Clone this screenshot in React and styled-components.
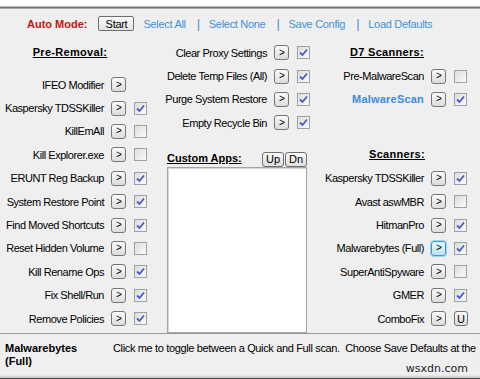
import styled, { createGlobalStyle } from "styled-components";

const GlobalStyle = createGlobalStyle`
  html, body {
    margin: 0;
    padding: 0;
    background: #ffffff;
  }
  body {
    font-family: "Liberation Sans", Arial, sans-serif;
    font-size: 11px;
    color: #000;
    overflow: hidden;
  }
`;

const preRemoval = [
  { label: "IFEO Modifier", box: null },
  { label: "Kaspersky TDSSKiller", box: true },
  { label: "KillEmAll", box: false },
  { label: "Kill Explorer.exe", box: false },
  { label: "ERUNT Reg Backup", box: true },
  { label: "System Restore Point", box: true },
  { label: "Find Moved Shortcuts", box: true },
  { label: "Reset Hidden Volume", box: false },
  { label: "Kill Rename Ops", box: true },
  { label: "Fix Shell/Run", box: true },
  { label: "Remove Policies", box: true },
];

const misc = [
  { label: "Clear Proxy Settings", box: true },
  { label: "Delete Temp Files (All)", box: true },
  { label: "Purge System Restore", box: true },
  { label: "Empty Recycle Bin", box: true },
];

const d7 = [
  { label: "Pre-MalwareScan", box: false },
  { label: "MalwareScan", box: true, accent: true },
];

const scanners = [
  { label: "Kaspersky TDSSKiller", box: true },
  { label: "Avast aswMBR", box: false },
  { label: "HitmanPro", box: true },
  { label: "Malwarebytes (Full)", box: true, hover: true },
  { label: "SuperAntiSpyware", box: false },
  { label: "GMER", box: true },
  { label: "ComboFix", box: "U" },
];

const Check = () => (
  <svg width="9" height="9" viewBox="0 0 9 9">
    <path d="M1 4.5 L3.5 7 L8 1.5" fill="none" stroke="#4b5bc4" strokeWidth="1.8" />
  </svg>
);

const OptionRow = ({ label, box, accent, hover }) => (
  <Row>
    <Label $accent={accent}>{label}</Label>
    <ArrowButton $hover={hover}>&gt;</ArrowButton>
    <BoxSlot>
      {box === "U" ? (
        <SmallButton>U</SmallButton>
      ) : box === null ? null : (
        <CheckBox>{box && <Check />}</CheckBox>
      )}
    </BoxSlot>
  </Row>
);

const App = () => {
  return (
    <>
      <GlobalStyle />
      <TopStrip />
      <Panel>
        <Toolbar>
          <AutoLabel>Auto Mode:</AutoLabel>
          <StartButton>Start</StartButton>
          <LinkText>Select All</LinkText>
          <Divider>|</Divider>
          <LinkText>Select None</LinkText>
          <Divider>|</Divider>
          <LinkText>Save Config</LinkText>
          <Divider>|</Divider>
          <LinkText>Load Defaults</LinkText>
        </Toolbar>

        <Columns>
          <Column $right={12}>
            <Header $shift={-8} $after={8.6}>Pre-Removal:</Header>
            {preRemoval.map((o) => (
              <OptionRow key={o.label} {...o} />
            ))}
          </Column>

          <Column $right={9}>
            {misc.map((o) => (
              <OptionRow key={o.label} {...o} />
            ))}
            <CustomHead>
              <CustomTitle>Custom Apps:</CustomTitle>
              <UpDn>
                <SmallButton $wide>Up</SmallButton>
                <SmallButton $wide>Dn</SmallButton>
              </UpDn>
            </CustomHead>
            <ListBox />
          </Column>

          <Column $right={12}>
            <Header $shift={-14}>D7 Scanners:</Header>
            {d7.map((o) => (
              <OptionRow key={o.label} {...o} />
            ))}
            <Header $shift={6} $before={32}>Scanners:</Header>
            {scanners.map((o) => (
              <OptionRow key={o.label} {...o} />
            ))}
          </Column>
        </Columns>
      </Panel>

      <StatusBar>
        <StatusTitle>
          Malwarebytes
          <br />
          (Full)
        </StatusTitle>
        <StatusText>
          Click me to toggle between a Quick and Full scan.&nbsp; Choose Save
          Defaults at the
        </StatusText>
        <Watermark>wsxdn.com</Watermark>
      </StatusBar>
    </>
  );
};

export default App;

const TopStrip = styled.div`
  height: 6px;
  background: #ffffff;
  border-bottom: 1px solid #b8b8b8;
`;

const Panel = styled.div`
  height: 326px;
  background: #efefef;
  border-top: 1px solid #767676;
  box-shadow: inset 0 1px 0 #a8a8a8;
  box-sizing: border-box;
`;

const Toolbar = styled.div`
  display: flex;
  align-items: center;
  height: 31px;
  padding-left: 27px;
  letter-spacing: -0.3px;
`;

const AutoLabel = styled.span`
  color: #cc1111;
  font-weight: 700;
  letter-spacing: 0;
  margin-right: 11px;
`;

const StartButton = styled.div`
  width: 36px;
  height: 15px;
  box-sizing: border-box;
  border: 1px solid #6f6f6f;
  border-radius: 2px;
  background: linear-gradient(#fbfbfb, #e2e2e2);
  display: flex;
  align-items: center;
  justify-content: center;
  margin-right: 9px;
`;

const LinkText = styled.span`
  color: #3f92dc;
`;

const Divider = styled.span`
  color: #3f92dc;
  margin: 0 9px 0 11px;
  font-size: 13px;
`;

const Columns = styled.div`
  display: grid;
  grid-template-columns: 160px 160px 160px;
  padding-top: 2px;
`;

const Column = styled.div`
  display: flex;
  flex-direction: column;
  padding-right: ${(p) => p.$right}px;
`;

const Header = styled.div`
  height: 23.4px;
  line-height: 23.4px;
  font-weight: 700;
  text-decoration: underline;
  text-align: center;
  padding-right: ${(p) => (p.$shift && p.$shift < 0 ? -p.$shift : 0)}px;
  padding-left: ${(p) => (p.$shift && p.$shift > 0 ? p.$shift : 0)}px;
  margin-bottom: ${(p) => p.$after || 0}px;
  margin-top: ${(p) => p.$before || 0}px;
  letter-spacing: 0.3px;
`;

const Row = styled.div`
  height: 23.4px;
  display: flex;
  align-items: center;
  justify-content: flex-end;
  gap: 7px;
`;

const Label = styled.span`
  white-space: nowrap;
  letter-spacing: ${(p) => (p.$accent ? "0.2px" : "-0.45px")};
  color: ${(p) => (p.$accent ? "#3a8be0" : "#000")};
  font-weight: ${(p) => (p.$accent ? 700 : 400)};
`;

const ArrowButton = styled.div`
  width: 15px;
  height: 15px;
  box-sizing: border-box;
  border: 1px solid ${(p) => (p.$hover ? "#3c9ad6" : "#767676")};
  border-radius: 3px;
  background: ${(p) =>
    p.$hover
      ? "linear-gradient(#e6f5fd, #bfe3f7)"
      : "linear-gradient(#fafafa, #dcdcdc)"};
  box-shadow: ${(p) => (p.$hover ? "0 0 0 1px #9fd2f0" : "none")};
  display: flex;
  align-items: center;
  justify-content: center;
  font-size: 10px;
  line-height: 1;
  padding-left: 1px;
`;

const BoxSlot = styled.div`
  width: 14px;
  display: flex;
  justify-content: flex-start;
  margin-left: 1px;
`;

const CheckBox = styled.div`
  width: 13px;
  height: 13px;
  box-sizing: border-box;
  border: 1px solid #9aa2ae;
  background: linear-gradient(135deg, #dcdcdc, #fbfbfb);
  display: flex;
  align-items: center;
  justify-content: center;
`;

const SmallButton = styled.div`
  height: 15px;
  width: ${(p) => (p.$wide ? "22px" : "14px")};
  box-sizing: border-box;
  border: 1px solid #6f6f6f;
  border-radius: 3px;
  background: linear-gradient(#fafafa, #dedede);
  display: flex;
  align-items: center;
  justify-content: center;
  font-size: 11px;
`;

const CustomHead = styled.div`
  display: flex;
  align-items: flex-end;
  justify-content: space-between;
  height: 16px;
  margin-top: 16px;
  padding-left: 7px;
  padding-right: 4px;
`;

const CustomTitle = styled.span`
  font-weight: 700;
  text-decoration: underline;
  line-height: 13px;
  padding-bottom: 2px;
`;

const UpDn = styled.div`
  display: flex;
  gap: 1px;
`;

const ListBox = styled.div`
  margin-left: 7px;
  margin-right: 4px;
  height: 164px;
  background: #ffffff;
  border: 1px solid #a5a5a5;
  box-shadow: inset 1px 1px 0 #d8d8d8;
`;

const StatusBar = styled.div`
  position: relative;
  height: 44px;
  background: #efefef;
  border-top: 1px solid #9a9a9a;
  border-bottom: 2px solid #4a4a4a;
  box-shadow: inset 0 -3px 3px -2px #b0b0b0;
  display: flex;
  overflow: hidden;
`;

const StatusTitle = styled.div`
  width: 108px;
  padding: 8px 0 0 5px;
  font-weight: 700;
  line-height: 13px;
  flex-shrink: 0;
`;

const StatusText = styled.div`
  padding-top: 8px;
  line-height: 13px;
  white-space: nowrap;
  letter-spacing: -0.35px;
`;

const Watermark = styled.span`
  position: absolute;
  right: 12px;
  bottom: 3px;
  font-family: "DejaVu Sans", sans-serif;
  font-size: 11px;
  color: #222;
`;
